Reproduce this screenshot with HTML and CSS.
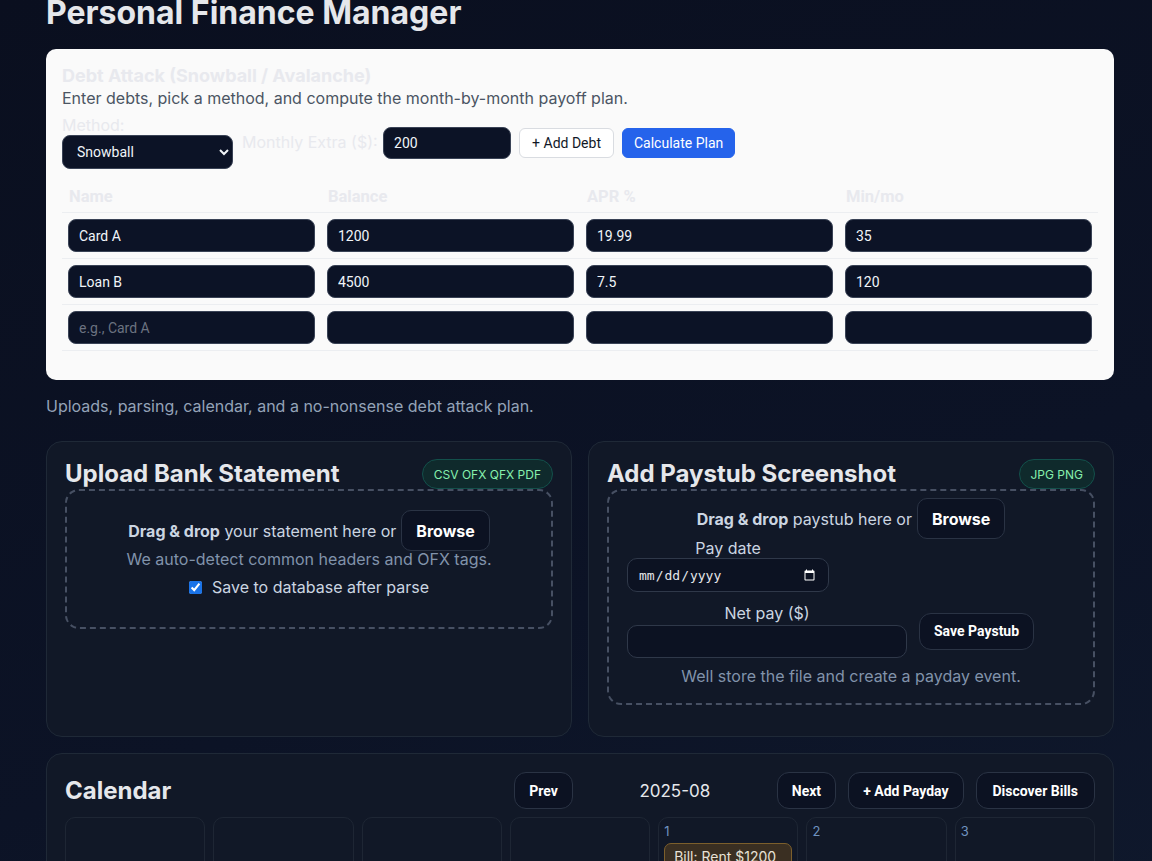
FILE: index.html
```html
<!DOCTYPE html>
<html lang="en">
<head>
<meta charset="utf-8">
<title>Personal Finance Manager</title>
<link rel="stylesheet" href="styles.css">
</head>
<body>
<div class="container">
  <header class="page-head">
    <h1 class="title">Personal Finance Manager</h1>

    <section class="debt-card">
      <h3 class="debt-title">Debt Attack (Snowball / Avalanche)</h3>
      <p class="debt-sub">Enter debts, pick a method, and compute the month-by-month payoff plan.</p>
      <div class="debt-controls">
        <label class="method-label">Method:
          <select class="method-select">
            <option>Snowball</option>
            <option>Avalanche</option>
          </select>
        </label>
        <label class="extra-label">Monthly Extra ($): <input class="extra-input" type="text" value="200"></label>
        <button class="btn-light">+ Add Debt</button>
        <button class="btn-primary">Calculate Plan</button>
      </div>
      <table class="debt-table">
        <thead>
          <tr><th>Name</th><th>Balance</th><th>APR %</th><th>Min/mo</th></tr>
        </thead>
        <tbody>
          <tr>
            <td><input class="cell-input" type="text" value="Card A"></td>
            <td><input class="cell-input" type="text" value="1200"></td>
            <td><input class="cell-input" type="text" value="19.99"></td>
            <td><input class="cell-input" type="text" value="35"></td>
          </tr>
          <tr>
            <td><input class="cell-input" type="text" value="Loan B"></td>
            <td><input class="cell-input" type="text" value="4500"></td>
            <td><input class="cell-input" type="text" value="7.5"></td>
            <td><input class="cell-input" type="text" value="120"></td>
          </tr>
          <tr>
            <td><input class="cell-input" type="text" placeholder="e.g., Card A"></td>
            <td><input class="cell-input" type="text"></td>
            <td><input class="cell-input" type="text"></td>
            <td><input class="cell-input" type="text"></td>
          </tr>
        </tbody>
      </table>
    </section>

    <p class="subtitle">Uploads, parsing, calendar, and a no-nonsense debt attack plan.</p>
  </header>

  <div class="upload-grid">
    <section class="card">
      <div class="card-head">
        <h2 class="card-title">Upload Bank Statement</h2>
        <span class="badge">CSV OFX QFX PDF</span>
      </div>
      <div class="dropzone dz-bank">
        <div class="dz-line"><span><strong>Drag &amp; drop</strong> your statement here or</span><button class="browse">Browse</button></div>
        <p class="dz-muted dz-hint">We auto-detect common headers and OFX tags.</p>
        <label class="check-line"><input type="checkbox" checked class="check"> Save to database after parse</label>
      </div>
    </section>

    <section class="card">
      <div class="card-head">
        <h2 class="card-title">Add Paystub Screenshot</h2>
        <span class="badge">JPG PNG</span>
      </div>
      <div class="dropzone dz-pay">
        <div class="dz-line"><span><strong>Drag &amp; drop</strong> paystub here or</span><button class="browse">Browse</button></div>
        <div class="pay-fields">
          <label class="field">Pay date
            <input type="date" class="date-input">
          </label>
          <label class="field">Net pay ($)
            <input type="text" class="net-input">
          </label>
          <button class="btn-dark">Save Paystub</button>
        </div>
        <p class="dz-muted dz-note">Well store the file and create a payday event.</p>
      </div>
    </section>
  </div>

  <section class="card cal-card">
    <div class="cal-head">
      <h2 class="card-title">Calendar</h2>
      <div class="cal-controls">
        <button class="btn-dark">Prev</button>
        <span class="month">2025-08</span>
        <button class="btn-dark">Next</button>
        <button class="btn-dark">+ Add Payday</button>
        <button class="btn-dark btn-wide">Discover Bills</button>
      </div>
    </div>
    <div class="cal-grid">
      <div class="day empty"></div>
      <div class="day empty"></div>
      <div class="day empty"></div>
      <div class="day empty"></div>
      <div class="day"><span class="day-num">1</span><div class="event bill">Bill: Rent $1200</div></div>
      <div class="day"><span class="day-num">2</span></div>
      <div class="day"><span class="day-num">3</span></div>
      <div class="day"><span class="day-num">4</span></div>
      <div class="day"><span class="day-num">5</span></div>
      <div class="day"><span class="day-num">6</span></div>
      <div class="day"><span class="day-num">7</span></div>
      <div class="day"><span class="day-num">8</span></div>
      <div class="day"><span class="day-num">9</span></div>
      <div class="day"><span class="day-num">10</span></div>
    </div>
  </section>
</div>
</body>
</html>
```

FILE: styles.css
```css
* { box-sizing: border-box; }

html, body {
  margin: 0;
  padding: 0;
}

body {
  font-family: "Inter", "Noto Sans", sans-serif;
  color: #e5e7eb;
  background: linear-gradient(160deg, #0a0f1f 0%, #0c1326 55%, #101a2e 100%);
  min-height: 861px;
  overflow: hidden;
}

.container {
  width: 1068px;
  margin-left: 46px;
}

.title {
  margin: -6px 0 0;
  font-size: 32px;
  line-height: 38px;
  font-weight: 700;
  color: #e5e7eb;
}

.debt-card {
  margin-top: 17px;
  background: #fafafa;
  border-radius: 10px;
  padding: 16px 16px 16px;
}

.debt-title {
  margin: 0;
  font-size: 18px;
  line-height: 22px;
  font-weight: 700;
  color: #e8e9ee;
}

.debt-sub {
  margin: 0 0 7px;
  font-size: 16px;
  line-height: 22px;
  color: #4b5563;
}

.debt-controls {
  display: flex;
  align-items: center;
  gap: 8px;
}

.method-label {
  display: flex;
  flex-direction: column;
  font-size: 16px;
  line-height: 19px;
  color: #e8e9ee;
}

.method-select {
  width: 171px;
  height: 34px;
  background: #0c1326;
  color: #f1f5f9;
  border: 1px solid #3a4356;
  border-radius: 8px;
  padding: 0 10px;
  font-family: "Roboto", sans-serif;
  font-size: 14px;
}

.extra-label {
  font-size: 16px;
  color: #e8e9ee;
  margin-left: 1px;
}

.extra-input {
  width: 128px;
  height: 32px;
  margin-left: 1px;
  background: #0c1326;
  color: #f1f5f9;
  border: 1px solid #3a4356;
  border-radius: 8px;
  padding: 0 10px;
  font-family: "Roboto", sans-serif;
  font-size: 14px;
}

.btn-light {
  height: 30px;
  padding: 0 12px;
  background: #ffffff;
  color: #111827;
  border: 1px solid #d9dce1;
  border-radius: 6px;
  font-family: "Roboto", sans-serif;
  font-size: 14px;
}

.btn-primary {
  height: 30px;
  padding: 0 11px;
  background: #2563eb;
  color: #ffffff;
  border: 1px solid #2563eb;
  border-radius: 6px;
  font-family: "Roboto", sans-serif;
  font-size: 14px;
}

.debt-table {
  width: 100%;
  margin: 12px 0 13px;
  border-collapse: collapse;
  table-layout: fixed;
}

.debt-table th {
  text-align: left;
  padding: 6px 7px;
  font-family: "Roboto", sans-serif;
  font-size: 16.5px;
  line-height: 19px;
  font-weight: 700;
  color: #e8e9ee;
  border-bottom: 1px solid #eceef1;
}

.debt-table td {
  padding: 6px 6px;
  border-bottom: 1px solid #eceef1;
}

.cell-input {
  display: block;
  width: 100%;
  height: 33px;
  background: #0c1326;
  color: #f1f5f9;
  border: 1px solid #3a4356;
  border-radius: 8px;
  padding: 0 10px;
  font-family: "Roboto", sans-serif;
  font-size: 14px;
}

.cell-input::placeholder { color: #6b7280; }

.subtitle {
  margin: 15px 0 24px;
  font-size: 16px;
  line-height: 22px;
  color: #94a3b8;
}

.upload-grid {
  display: grid;
  grid-template-columns: 1fr 1fr;
  gap: 16px;
}

.card {
  background: #111827;
  border: 1px solid #1f2937;
  border-radius: 16px;
  padding: 17px 18px 31px;
}

.card-head {
  display: flex;
  justify-content: space-between;
  align-items: center;
  height: 30px;
}

.card-title {
  margin: 0;
  font-size: 24px;
  line-height: 30px;
  font-weight: 700;
  color: #e5e7eb;
}

.badge {
  display: inline-flex;
  align-items: center;
  height: 30px;
  padding: 0 11px;
  border-radius: 999px;
  background: #0f2a2c;
  border: 1px solid #13504b;
  color: #86efac;
  font-size: 12px;
}

.dropzone {
  border: 2px dashed #475063;
  border-radius: 14px;
  text-align: center;
  color: #cbd5e1;
  font-size: 16px;
}

.dz-bank { padding: 19px 18px 29px; }

.dz-pay { padding: 7px 18px 16px; }

.dz-line {
  display: flex;
  justify-content: center;
  align-items: center;
  gap: 5px;
  height: 41px;
  line-height: 22px;
}

.dz-line strong { font-weight: 700; }

.browse {
  height: 41px;
  padding: 0 14px;
  background: #0c1222;
  color: #ffffff;
  border: 1px solid #2a3344;
  border-radius: 10px;
  font-family: "Inter", sans-serif;
  font-size: 16px;
  font-weight: 700;
}

.dz-muted {
  margin: 0;
  line-height: 22px;
  color: #8193ab;
}

.dz-hint { margin-top: -3px; }

.check-line {
  display: inline-flex;
  align-items: center;
  gap: 10px;
  margin-top: 6px;
  line-height: 22px;
  color: #cbd5e1;
}

.check {
  width: 13px;
  height: 13px;
  margin: 0;
  accent-color: #1a73e8;
}

.pay-fields {
  display: flex;
  flex-wrap: wrap;
  align-items: center;
  gap: 12px;
}

.field {
  display: flex;
  flex-direction: column;
  line-height: 19px;
  color: #cbd5e1;
}

.date-input {
  width: 202px;
  height: 34px;
  background: #0c1222;
  color: #e5e7eb;
  border: 1px solid #2f3849;
  border-radius: 10px;
  padding: 0 10px;
  font-family: "DejaVu Sans Mono", monospace;
  font-size: 13px;
  color-scheme: dark;
}

.net-input {
  width: 280px;
  height: 33px;
  margin-top: 2px;
  background: #0c1222;
  color: #e5e7eb;
  border: 1px solid #2f3849;
  border-radius: 10px;
  padding: 0 10px;
}

.dz-note { margin-top: 7px; }

.btn-dark {
  height: 37px;
  padding: 0 14px;
  background: #0c1222;
  color: #ffffff;
  border: 1px solid #2a3344;
  border-radius: 12px;
  font-family: "Roboto", sans-serif;
  font-size: 14px;
  font-weight: 700;
}

.btn-wide { padding: 0 16px; }

.cal-card {
  margin-top: 16px;
  padding-top: 18px;
}

.cal-head {
  display: flex;
  justify-content: space-between;
  align-items: center;
}

.cal-controls {
  display: flex;
  align-items: center;
  gap: 12px;
}

.month {
  width: 180px;
  text-align: center;
  font-size: 17px;
  color: #e5e7eb;
}

.cal-grid {
  display: grid;
  grid-template-columns: repeat(7, 1fr);
  gap: 8px;
  margin-top: 8px;
}

.day {
  min-height: 110px;
  border: 1px solid #1e2634;
  border-radius: 10px;
  padding: 5px 5px;
}

.day-num {
  display: block;
  font-size: 13px;
  line-height: 16px;
  color: #6f93c0;
}

.event {
  margin-top: 4px;
  padding: 4px 9px;
  border-radius: 7px;
  font-size: 14px;
  line-height: 18px;
}

.bill {
  background: #3a2f22;
  border: 1px solid #7c5f2c;
  color: #e8e2d6;
}
```
